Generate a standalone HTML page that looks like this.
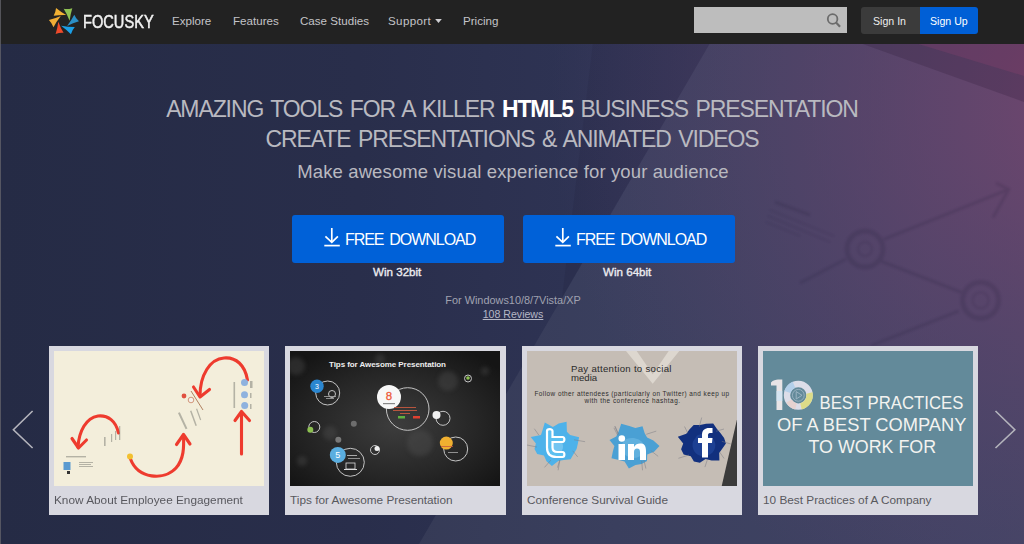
<!DOCTYPE html>
<html><head><meta charset="utf-8">
<style>
*{margin:0;padding:0;box-sizing:border-box}
html,body{width:1024px;height:544px;overflow:hidden;background:#262c48}
body{position:relative;font-family:"Liberation Sans",sans-serif}
.a{position:absolute;white-space:nowrap}
#hdr{position:absolute;left:0;top:0;width:1024px;height:44px;background:#222222}
#bg{position:absolute;left:0;top:43px;width:1024px;height:501px}
.nav{position:absolute;top:13px;font-size:11.6px;color:#c4c4c8;line-height:16px}
.btn{position:absolute;top:215px;width:212px;height:48px;background:#0061d8;border-radius:3px}
.btn .t{position:absolute;left:53px;top:16px;font-size:16px;letter-spacing:-1.05px;word-spacing:2.5px;color:#fff;line-height:18px}
.win{position:absolute;top:265px;font-size:11.6px;font-weight:normal;-webkit-text-stroke:0.35px #ececf0;color:#ececf0;line-height:14px}
.card{position:absolute;top:346px;width:220px;height:169px;background:#d8d8e0}
.card .img{position:absolute;left:5px;top:5px;width:210px;height:135px;overflow:hidden}
.card .cap{position:absolute;left:5px;top:147px;font-size:11.8px;color:#58585e;line-height:14px;white-space:nowrap}
</style></head>
<body>
<svg id="bg" width="1024" height="501" viewBox="0 0 1024 501">
  <defs>
    <linearGradient id="g1" x1="0" y1="0" x2="1" y2="0">
      <stop offset="0" stop-color="#252b45"/>
      <stop offset="0.35" stop-color="#292e4b"/>
      <stop offset="0.6" stop-color="#2f3455"/>
      <stop offset="1" stop-color="#383a5c"/>
    </linearGradient>
    <radialGradient id="g3" gradientUnits="userSpaceOnUse" cx="1090" cy="60" r="540">
      <stop offset="0" stop-color="#7a4670" stop-opacity="0.85"/>
      <stop offset="0.45" stop-color="#6a4670" stop-opacity="0.5"/>
      <stop offset="1" stop-color="#5a4670" stop-opacity="0"/>
    </radialGradient>
    <filter id="bgb"><feGaussianBlur stdDeviation="0.8"/></filter>
  </defs>
  <rect width="1024" height="501" fill="url(#g1)"/>
  <polygon points="710,0 1024,0 1024,501 419,501" fill="#ffffff" opacity="0.055"/>
  <polygon points="593,0 710,0 562,255" fill="#10122a" opacity="0.10"/>
  <rect width="1024" height="501" fill="url(#g3)"/>
  <polygon points="915,0 1024,0 1024,33" fill="#6e2850" opacity="0.28"/>
  <polygon points="860,0 915,0 1024,33 1024,59" fill="#2a1530" opacity="0.22"/>
  <g transform="translate(0,-43)" fill="none" stroke="#241a38" opacity="0.16" filter="url(#bgb)">
    <circle cx="865" cy="249" r="18" stroke-width="5"/>
    <circle cx="980.6" cy="300.3" r="18" stroke-width="5"/>
    <circle cx="865" cy="249" r="7" stroke-width="1.5"/>
    <circle cx="980.6" cy="300.3" r="8" stroke-width="1.5"/>
    <line x1="883.7" y1="239.4" x2="1008.7" y2="189.4" stroke-width="3"/>
    <polyline points="996,183 1008.7,189.4 993,217.5" stroke-width="3"/>
    <line x1="880.6" y1="261" x2="961.9" y2="292.5" stroke-width="3"/>
    <line x1="846" y1="259" x2="800" y2="283" stroke-width="3"/>
    <line x1="958.7" y1="311" x2="871" y2="345.6" stroke-width="3"/>
    <line x1="775" y1="202" x2="810" y2="215" stroke-width="3"/>
    <line x1="770" y1="210" x2="834" y2="236" stroke-width="1.2"/>
    <line x1="768" y1="216" x2="830" y2="242" stroke-width="1.2"/>
    <line x1="766" y1="222" x2="800" y2="236" stroke-width="1.2"/>
  </g>
</svg>
<div id="hdr"></div>

<!-- logo -->
<svg class="a" style="left:0;top:0" width="90" height="43" viewBox="0 0 90 43">
<path d="M56.02,8.08 Q60.57,11.86 66.21,15.02 Q59.65,14.83 53.67,15.70 Q55.68,12.12 56.02,8.08 Z" fill="#f2b133"/>
<path d="M63.68,8.80 Q68.11,9.36 72.30,8.13 Q70.43,13.99 69.62,20.67 Q67.06,14.25 63.68,8.80 Z" fill="#8fc153"/>
<path d="M74.29,14.76 Q75.94,18.65 78.99,21.37 Q73.15,23.02 67.12,25.96 Q71.31,20.44 74.29,14.76 Z" fill="#2b8fc6"/>
<path d="M61.06,25.65 Q68.16,26.89 74.83,26.99 Q72.01,30.21 70.91,34.16 Q66.63,29.69 61.06,25.65 Z" fill="#1b9fe6"/>
<path d="M58.31,21.66 Q60.55,27.76 63.57,32.86 Q59.50,32.61 55.62,34.09 Q57.45,28.24 58.31,21.66 Z" fill="#ee4a2a"/>
<path d="M48.91,19.98 Q54.75,18.70 60.78,16.06 Q56.54,21.54 53.50,27.26 Q51.91,23.07 48.91,19.98 Z" fill="#f0ac36"/>
</svg>
<div class="a" style="left:83px;top:12px;font-size:18.5px;color:#f2f2f2;line-height:20px;-webkit-text-stroke:0.5px #f2f2f2;transform:scaleX(0.79);transform-origin:0 0">FOCUSKY</div>

<div class="nav" style="left:172px">Explore</div>
<div class="nav" style="left:233px">Features</div>
<div class="nav" style="left:300px">Case Studies</div>
<div class="nav" style="left:388px;letter-spacing:0.35px">Support</div>
<svg class="a" style="left:434px;top:18px" width="9" height="6" viewBox="0 0 9 6"><polygon points="1.2,0.9 7.8,0.9 4.5,4.9" fill="#d0d0d4"/></svg>
<div class="nav" style="left:463px">Pricing</div>

<div class="a" style="left:694px;top:7px;width:153px;height:26px;background:#bdbdbd"></div>
<svg class="a" style="left:820px;top:8px" width="26" height="24" viewBox="0 0 26 24"><circle cx="12.6" cy="11" r="4.8" fill="none" stroke="#6c6c6c" stroke-width="1.8"/><line x1="16" y1="14.6" x2="20" y2="18.8" stroke="#6c6c6c" stroke-width="2.2"/></svg>
<div class="a" style="left:861px;top:7px;width:59px;height:27px;background:#3b3b3b;border-radius:3px 0 0 3px"></div>
<div class="a" style="left:920px;top:7px;width:58px;height:27px;background:#005fd6;border-radius:0 3px 3px 0"></div>
<div class="a" style="left:873px;top:13px;font-size:10.6px;color:#eee;line-height:16px">Sign In</div>
<div class="a" style="left:930px;top:13px;font-size:10.6px;color:#fff;line-height:16px">Sign Up</div>

<div class="a" style="left:0;top:93.5px;width:1024px;text-align:center;font-size:23px;letter-spacing:-1.1px;word-spacing:2.2px;color:#b9b9c0;line-height:30px">AMAZING TOOLS FOR A KILLER <b style="color:#fff">HTML5</b> BUSINESS PRESENTATION<br>CREATE PRESENTATIONS &amp; ANIMATED VIDEOS</div>
<div class="a" style="left:1px;top:161px;width:1024px;text-align:center;font-size:18.5px;letter-spacing:0.12px;color:#b9b9c0;line-height:22px">Make awesome visual experience for your audience</div>

<div class="btn" style="left:292px"><div class="t">FREE DOWNLOAD</div></div>
<div class="btn" style="left:523px"><div class="t">FREE DOWNLOAD</div></div>
<svg class="a" style="left:318px;top:222px" width="24" height="28" viewBox="0 0 24 28"><line x1="13.8" y1="6" x2="13.8" y2="20" stroke="#fff" stroke-width="1.7"/><polyline points="7.4,14.3 13.8,20.4 19.9,14.3" fill="none" stroke="#fff" stroke-width="1.7"/><line x1="6.3" y1="23.6" x2="21.8" y2="23.6" stroke="#fff" stroke-width="1.7"/></svg>
<svg class="a" style="left:549px;top:222px" width="24" height="28" viewBox="0 0 24 28"><line x1="13.8" y1="6" x2="13.8" y2="20" stroke="#fff" stroke-width="1.7"/><polyline points="7.4,14.3 13.8,20.4 19.9,14.3" fill="none" stroke="#fff" stroke-width="1.7"/><line x1="6.3" y1="23.6" x2="21.8" y2="23.6" stroke="#fff" stroke-width="1.7"/></svg>
<div class="win" style="left:373px">Win 32bit</div>
<div class="win" style="left:603px">Win 64bit</div>
<div class="a" style="left:1px;top:294px;width:1024px;text-align:center;font-size:10.9px;color:#a0a2b0;line-height:13px">For Windows10/8/7Vista/XP</div>
<div class="a" style="left:1px;top:308px;width:1024px;text-align:center;font-size:10.6px;color:#b5b7c5;line-height:13px"><span style="text-decoration:underline">108 Reviews</span></div>

<div class="card" style="left:49px"><div class="img" style="background:#f3eedb"><svg width="210" height="135" viewBox="0 0 210 135">
<g fill="none" stroke="#ee3b2e" stroke-width="3.1" stroke-linecap="round" stroke-linejoin="round">
<path d="M187.5,103 L187.5,61"/>
<polyline points="181,69.5 187.5,60.5 195.5,69.5"/>
<path d="M193.5,29 C191,14 182,6 170,7 C156,8 146,24 146,45"/>
<polyline points="139.5,36 146,46 155.5,38.5"/>
<path d="M76.5,108 C84,128 110,130 122,117 C130,108 130,96 129.5,84"/>
<polyline points="122.5,93.5 129.5,83.5 136,93"/>
<path d="M64.5,82 C62,70 54,64 44,65 C32,67 25,80 24,96"/>
<polyline points="18,87.5 24.5,97 32.5,89"/>
</g>
<g fill="#8fb2de"><circle cx="190.5" cy="31.5" r="3.5"/><circle cx="190.5" cy="43.8" r="3.5"/><circle cx="190.7" cy="54.6" r="3.5"/></g>
<g fill="#8a8a80" opacity="0.6">
<rect x="196" y="30" width="2.5" height="7"/><rect x="196" y="42" width="1.5" height="5"/><rect x="196" y="53" width="1.5" height="5"/><rect x="179.5" y="31" width="1.6" height="26"/>
<rect x="124" y="62" width="2" height="18" transform="rotate(-25 124 62)"/><rect x="136" y="60" width="1.5" height="16" transform="rotate(-20 136 60)"/><rect x="142" y="58" width="1.2" height="12" transform="rotate(-20 142 58)"/>
<rect x="65" y="75" width="1.3" height="14"/><rect x="61" y="80" width="1.2" height="9"/><rect x="57" y="83" width="1.2" height="8"/><rect x="50" y="86" width="1.6" height="9"/>
<rect x="12" y="105" width="20" height="1.4"/><rect x="25" y="111" width="14" height="1"/><rect x="25" y="113" width="12" height="1"/><rect x="25" y="115" width="14" height="1"/></g>
<line x1="137" y1="40" x2="149" y2="59" stroke="#b08060" stroke-width="1"/>
<rect x="9.5" y="111" width="7" height="8" fill="#5a9ad0"/><rect x="13" y="120" width="3" height="3" fill="#333"/>
<circle cx="76" cy="105.5" r="3" fill="#f2c030"/><circle cx="130" cy="45" r="2.4" fill="#e05040"/><circle cx="137" cy="49" r="2.8" fill="#f4f0ea" stroke="#c98060" stroke-width="0.8"/>
</svg></div><div class="cap">Know About Employee Engagement</div></div>
<div class="card" style="left:285px;width:221px"><div class="img" style="background:#1e1e1e"><svg width="210" height="135" viewBox="0 0 210 135">
<defs><radialGradient id="r2" cx="0.5" cy="0.55" r="0.65"><stop offset="0" stop-color="#3d3d3d"/><stop offset="0.6" stop-color="#262626"/><stop offset="1" stop-color="#151515"/></radialGradient>
<filter id="bl"><feGaussianBlur stdDeviation="2"/></filter></defs>
<rect width="210" height="135" fill="url(#r2)"/>
<g fill="#555" opacity="0.35" filter="url(#bl)"><circle cx="6" cy="15" r="9"/><circle cx="158" cy="30" r="10"/><circle cx="130" cy="92" r="13"/><circle cx="40" cy="82" r="7"/><circle cx="12" cy="110" r="5"/><circle cx="90" cy="8" r="5"/><circle cx="195" cy="20" r="4"/></g>
<text x="39" y="15.6" font-family="Liberation Sans" font-weight="bold" font-size="8" fill="#eeeeee" textLength="117">Tips for Awesome Presentation</text>
<g fill="none" stroke="#c4c4c4" stroke-width="1">
<circle cx="37.7" cy="42" r="12"/><circle cx="117.7" cy="58" r="21.3"/><circle cx="153" cy="67.3" r="7"/><circle cx="165.7" cy="98" r="12"/><circle cx="60.3" cy="111.3" r="14"/><circle cx="24.3" cy="76" r="5.5"/><circle cx="85" cy="99" r="4.5"/><circle cx="178" cy="27.5" r="3.5"/><circle cx="42" cy="43" r="3.5"/>
</g>
<circle cx="27" cy="35.3" r="6.7" fill="#2a86d0"/><text x="27" y="38" font-family="Liberation Sans" font-size="7" fill="#fff" text-anchor="middle">3</text>
<circle cx="99" cy="46" r="12" fill="#f7f7f7"/><text x="99" y="48.5" font-family="Liberation Sans" font-size="11.5" fill="#ee5a3a" text-anchor="middle" stroke="#ee5a3a" stroke-width="0.3">8</text><rect x="93" y="52" width="12" height="1.2" fill="#888"/>
<circle cx="146.5" cy="63.9" r="4" fill="#f0f0f0"/>
<circle cx="156.3" cy="92.1" r="6.5" fill="#f0b030"/>
<circle cx="47.8" cy="103.9" r="8" fill="#5aaee0"/><text x="47.8" y="107" font-family="Liberation Sans" font-size="9" fill="#fff" text-anchor="middle">5</text>
<circle cx="20.3" cy="78.8" r="3" fill="#8cc050"/><circle cx="178" cy="27" r="1.8" fill="#8cc050"/>
<circle cx="87" cy="97.5" r="2.5" fill="#f0f0f0"/>
<circle cx="63.8" cy="72.7" r="3" fill="#888" opacity="0.7"/><circle cx="48.3" cy="88.7" r="3" fill="#999" opacity="0.7"/>
<g fill="#c85a40"><rect x="104" y="56" width="22" height="0.9"/><rect x="103" y="59" width="24" height="0.9"/><rect x="110" y="62" width="10" height="0.9"/><rect x="151" y="95" width="12" height="0.8"/></g>
<rect x="108" y="65" width="7" height="2.5" fill="#60b040"/><rect x="123" y="65" width="7" height="2.5" fill="#e04030"/>
<g fill="#aaa"><rect x="34" y="45" width="12" height="0.8"/><rect x="36" y="47" width="8" height="0.8"/><rect x="57" y="104" width="10" height="1"/><rect x="58" y="107" width="12" height="0.8"/><rect x="158" y="101" width="10" height="0.8"/></g>
<rect x="56" y="112" width="9" height="6" fill="none" stroke="#ddd" stroke-width="0.8"/><rect x="54" y="118" width="13" height="1" fill="#ddd"/>
</svg></div><div class="cap">Tips for Awesome Presentation</div></div>
<div class="card" style="left:522px"><div class="img" style="background:#c5bdb5"><svg width="210" height="135" viewBox="0 0 210 135">
<polygon points="99,0 152.3,0 125.7,32.7" fill="#ddd7cf"/><polygon points="109.7,0 141.7,0 125.7,23.3" fill="#c5bdb5"/>
<polygon points="211,64 194.5,136 211,136" fill="#3b3b3b"/>
<text x="44" y="20.6" font-family="Liberation Sans" font-size="9.6" fill="#2a2a2a" textLength="100.5">Pay attention to  social</text>
<text x="44" y="30.3" font-family="Liberation Sans" font-size="9.6" fill="#2a2a2a">media</text>
<text x="7.5" y="44.7" font-family="Liberation Sans" font-size="6.4" fill="#2e2e2e" textLength="194.5">Follow other attendees  (particularly on Twitter) and keep  up</text>
<text x="57.5" y="52.1" font-family="Liberation Sans" font-size="6.4" fill="#2e2e2e" textLength="95.5">with the conference hashtag.</text>
<g transform="translate(28.5,92.5)">
<path d="M22.4,0.0 L21.1,5.6 L18.1,10.5 L15.1,15.7 L8.3,16.4 L2.8,17.6 L-3.6,22.5 L-9.0,17.7 L-11.6,12.1 L-18.3,10.6 L-21.0,5.5 L-19.6,0.0 L-24.8,-6.6 L-14.5,-8.4 L-12.9,-13.4 L-10.7,-21.0 L-2.6,-16.5 L3.2,-20.0 L11.1,-21.8 L11.4,-11.8 L14.6,-8.4 L23.6,-6.2 Z" fill="#4db2ea"/><line x1="-16.6" y1="-8.3" x2="-21.2" y2="-14.8" stroke="#7a7a82" stroke-width="0.5"/><line x1="18.5" y1="-3.7" x2="29.6" y2="-1.8" stroke="#7a7a82" stroke-width="0.5"/><line x1="-18.6" y1="3.5" x2="-28.6" y2="1.5" stroke="#7a7a82" stroke-width="0.5"/><line x1="4.2" y1="16.7" x2="2.0" y2="24.1" stroke="#7a7a82" stroke-width="0.5"/><line x1="-4.6" y1="16.6" x2="-11.0" y2="23.9" stroke="#7a7a82" stroke-width="0.5"/><line x1="4.4" y1="16.6" x2="2.6" y2="26.8" stroke="#7a7a82" stroke-width="0.5"/><line x1="17.2" y1="7.3" x2="22.2" y2="13.4" stroke="#7a7a82" stroke-width="0.5"/>
<path d="M-8,-3 C-6,-7 3,-6 6,-2 C10,4 6,12 -2,12 C-8,12 -11,6 -8,-3Z" fill="#9ad8f8" opacity="0.5"/>
<path d="M-8.5,-12.5 C-8.5,-15 -3,-15 -3,-12.5 L-3,-6.5 L7,-6.5 C9.5,-6.5 9.5,-1.5 7,-1.5 L-3,-1.5 L-3,4 C-3,7 -1,8.5 2,8.5 L7,8.5 C9.5,8.5 9.5,13.5 7,13.5 L1,13.5 C-5,13.5 -8.5,10 -8.5,4 Z" fill="#5cc0f0" stroke="#fff" stroke-width="2.2"/>
</g>
<g transform="translate(105.5,95)">
<path d="M27.0,0.0 L21.6,5.7 L14.7,8.5 L14.5,15.0 L9.1,17.9 L3.0,19.0 L-3.6,22.6 L-7.9,15.5 L-13.5,14.0 L-21.0,12.2 L-19.6,5.2 L-18.1,0.0 L-23.0,-6.1 L-16.3,-9.4 L-13.9,-14.5 L-11.3,-22.2 L-3.2,-20.1 L2.9,-18.0 L10.0,-19.7 L12.2,-12.7 L14.6,-8.5 L20.9,-5.5 Z" fill="#4aa0d4"/><line x1="11.3" y1="13.7" x2="13.4" y2="22.6" stroke="#7a7a82" stroke-width="0.5"/><line x1="9.2" y1="15.0" x2="10.0" y2="24.3" stroke="#7a7a82" stroke-width="0.5"/><line x1="-14.8" y1="-10.7" x2="-18.6" y2="-18.2" stroke="#7a7a82" stroke-width="0.5"/><line x1="-14.1" y1="-11.5" x2="-17.8" y2="-19.7" stroke="#7a7a82" stroke-width="0.5"/><line x1="18.3" y1="4.6" x2="25.7" y2="10.4" stroke="#7a7a82" stroke-width="0.5"/><line x1="-13.9" y1="-11.7" x2="-17.4" y2="-19.8" stroke="#7a7a82" stroke-width="0.5"/><line x1="13.8" y1="-11.7" x2="23.8" y2="-14.9" stroke="#7a7a82" stroke-width="0.5"/>
<path d="M-8,-6 C-2,-10 8,-8 11,-2 C14,5 9,12 1,12 C-7,12 -12,5 -11,-1Z" fill="#7cc4ea" opacity="0.45"/>
<rect x="-14" y="-2" width="6.5" height="16" fill="#fff"/><circle cx="-10.7" cy="-7.5" r="3.3" fill="#fff"/>
<path d="M-4.5,-2 L1.5,-2 L1.5,1 C3,-2 6,-3 9,-2.5 C12.5,-2 13.5,1 13.5,5 L13.5,14 L7.5,14 L7.5,6 C7.5,3.5 6.5,2.5 4.5,2.5 C2.5,2.5 1.5,4 1.5,6 L1.5,14 L-4.5,14Z" fill="#fff"/>
</g>
<g transform="translate(176,92.5)">
<path d="M22.9,0.0 L19.4,5.1 L16.2,9.4 L16.4,17.0 L8.6,16.9 L2.5,15.6 L-3.1,19.3 L-9.1,17.9 L-12.2,12.7 L-19.3,11.1 L-21.9,5.8 L-19.8,0.0 L-25.2,-6.7 L-16.7,-9.7 L-13.6,-14.1 L-9.3,-18.4 L-3.0,-18.5 L3.1,-19.7 L10.2,-20.1 L14.0,-14.5 L17.6,-10.2 L21.1,-5.6 Z" fill="#12307e"/><line x1="18.8" y1="-2.2" x2="27.8" y2="0.5" stroke="#7a7a82" stroke-width="0.5"/><line x1="-3.7" y1="-16.8" x2="-1.3" y2="-26.0" stroke="#7a7a82" stroke-width="0.5"/><line x1="4.2" y1="16.7" x2="1.9" y2="23.6" stroke="#7a7a82" stroke-width="0.5"/><line x1="-15.2" y1="-10.3" x2="-18.5" y2="-17.0" stroke="#7a7a82" stroke-width="0.5"/><line x1="-14.0" y1="11.5" x2="-24.6" y2="14.8" stroke="#7a7a82" stroke-width="0.5"/><line x1="13.2" y1="-12.3" x2="21.0" y2="-14.5" stroke="#7a7a82" stroke-width="0.5"/><line x1="16.5" y1="8.4" x2="21.1" y2="15.0" stroke="#7a7a82" stroke-width="0.5"/>
<path d="M-6,-8 C0,-12 10,-8 12,-1 C14,6 8,13 0,13 C-8,12 -12,5 -10,-2Z" fill="#2850a8" opacity="0.5"/>
<path d="M-1,14 L-1,-0.5 L-5,-0.5 L-5,-5.5 L-1,-5.5 L-1,-8.5 C-1,-13.5 2,-15.5 6,-15.5 L9.5,-15.5 L9.5,-10.5 L7,-10.5 C5.5,-10.5 5,-9.5 5,-8 L5,-5.5 L9.5,-5.5 L9,-0.5 L5,-0.5 L5,14Z" fill="#fff"/>
</g>
</svg></div><div class="cap">Conference Survival Guide</div></div>
<div class="card" style="left:758px"><div class="img" style="background:#638a9a"><svg width="210" height="135" viewBox="0 0 210 135">
<path d="M8,31.5 C10,29.5 13,28.6 15,28.6 L19.3,28.6 L19.3,59 L13.5,59 L13.5,34.5 L8,34.5 Z" fill="#e8e4e6"/>
<path d="M13.5,40 L19.3,40 L19.3,50 L13.5,50Z" fill="#cfe4f4" opacity="0.8"/>
<circle cx="35.3" cy="44.3" r="11.3" fill="none" stroke="#dcdde8" stroke-width="6.4"/>
<path d="M24.5,41 A11.3,11.3 0 0 1 31,33.8" fill="none" stroke="#b4d0ea" stroke-width="6.4"/>
<path d="M46.4,42 A11.3,11.3 0 0 1 38,55.3" fill="none" stroke="#dcdc88" stroke-width="6.4"/>
<path d="M33,55.4 A11.3,11.3 0 0 1 26,50" fill="none" stroke="#e6d2d0" stroke-width="6.4"/>
<circle cx="35.3" cy="44.3" r="5.9" fill="none" stroke="#a2b8c6" stroke-width="0.8"/>
<polygon points="33.2,40.6 33.2,48 39,44.3" fill="none" stroke="#a2b8c6" stroke-width="0.9"/>
<g font-family="Liberation Sans" font-size="18.6" fill="#f3f3f0">
<text x="56.5" y="57.5" textLength="143.8" lengthAdjust="spacingAndGlyphs">BEST PRACTICES</text>
<text x="14" y="79.9" textLength="189.5" lengthAdjust="spacingAndGlyphs">OF A BEST COMPANY</text>
<text x="45.5" y="102" textLength="127.6" lengthAdjust="spacingAndGlyphs">TO WORK FOR</text>
</g>
</svg></div><div class="cap">10 Best Practices of A Company</div></div>

<svg class="a" style="left:0;top:400px" width="50" height="60" viewBox="0 0 50 60"><polyline points="32.6,11 13.4,29.8 32.6,48" fill="none" stroke="#b4b4bc" stroke-width="1.6"/></svg>
<svg class="a" style="left:974px;top:400px" width="50" height="60" viewBox="0 0 50 60"><polyline points="21.5,11 40.8,29.8 21.5,48" fill="none" stroke="#b4b4bc" stroke-width="1.6"/></svg>
<div class="a" style="left:0;top:0;width:1px;height:544px;background:#66666c;opacity:0.75"></div>
</body></html>
